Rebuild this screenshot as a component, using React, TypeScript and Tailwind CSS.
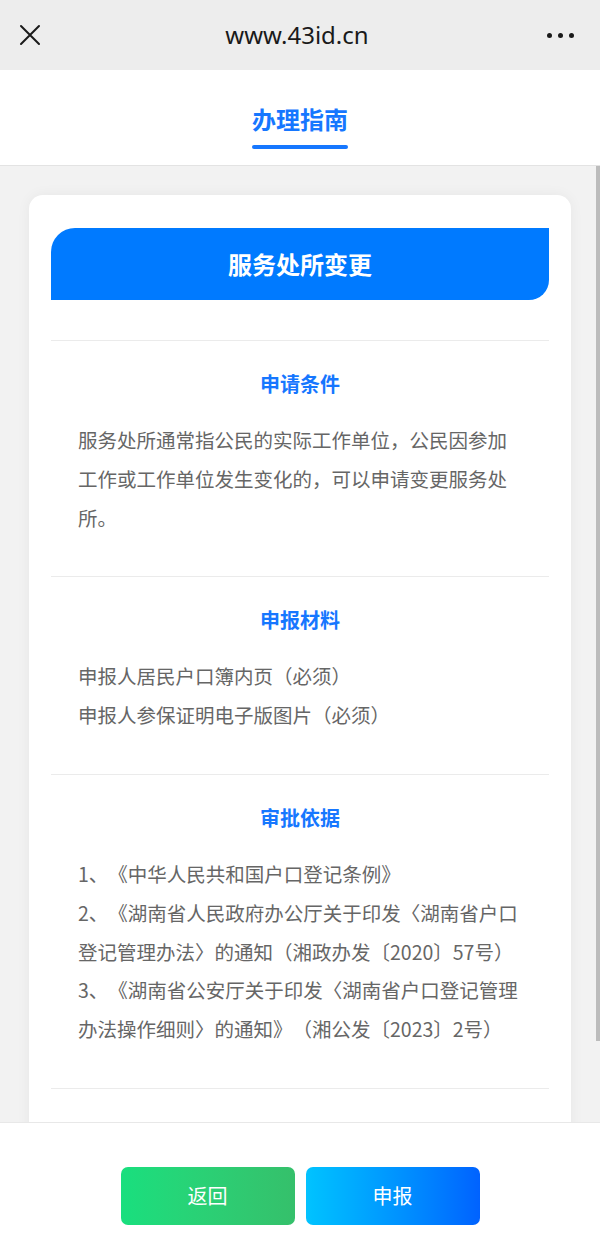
import React from 'react';

const sections: { title: string; lines: string[] }[] = [
  {
    title: '申请条件',
    lines: [
      '服务处所通常指公民的实际工作单位，公民因参加',
      '工作或工作单位发生变化的，可以申请变更服务处',
      '所。',
    ],
  },
  {
    title: '申报材料',
    lines: ['申报人居民户口簿内页（必须）', '申报人参保证明电子版图片（必须）'],
  },
  {
    title: '审批依据',
    lines: [
      '1、《中华人民共和国户口登记条例》',
      '2、《湖南省人民政府办公厅关于印发〈湖南省户口',
      '登记管理办法〉的通知（湘政办发〔2020〕57号）',
      '3、《湖南省公安厅关于印发〈湖南省户口登记管理',
      '办法操作细则〉的通知》（湘公发〔2023〕2号）',
    ],
  },
];

const cjk = { fontFamily: '"Noto Sans CJK SC", "Noto Sans", sans-serif' };

export default function App() {
  return (
    <div className="relative flex h-[1233px] w-[600px] flex-col overflow-hidden bg-white" style={cjk}>
      {/* browser title bar */}
      <div className="flex h-[70px] shrink-0 items-center justify-between bg-[#ededed] px-[18px]">
        <svg width="22" height="22" viewBox="0 0 22 22" className="ml-[1px]">
          <path d="M2 2 L20 20 M20 2 L2 20" stroke="#1a1a1a" strokeWidth="2" strokeLinecap="round" />
        </svg>
        <div className="ml-[6px] text-[24px] text-[#1a1a1a]" style={{ fontFamily: '"Noto Sans", "Open Sans", sans-serif' }}>
          www.43id.cn
        </div>
        <div className="mr-[8px] flex gap-[6px]">
          <span className="h-[5px] w-[5px] rounded-full bg-[#1a1a1a]" />
          <span className="h-[5px] w-[5px] rounded-full bg-[#1a1a1a]" />
          <span className="h-[5px] w-[5px] rounded-full bg-[#1a1a1a]" />
        </div>
      </div>

      {/* tab */}
      <div className="flex h-[96px] shrink-0 flex-col items-center border-b border-[#e3e3e3] pt-[33px]">
        <div className="text-[24px] font-bold leading-[32px] text-[#1677ff]">办理指南</div>
        <div className="mt-[10px] h-[4px] w-[96px] rounded-full bg-[#1677ff]" />
      </div>

      {/* content */}
      <div className="flex-1 overflow-hidden bg-[#f2f2f2] px-[29px] pt-[29px]">
        <div className="rounded-[14px] bg-white px-[22px] pt-[33px] pb-[40px] shadow-[0_0_14px_rgba(0,0,0,0.05)]">
          <div className="flex h-[72px] items-center justify-center rounded-tl-[24px] rounded-br-[20px] bg-[#007aff] text-[24px] font-bold text-white">
            服务处所变更
          </div>
          <div className="mt-[40px]">
            {sections.map((s) => (
              <div key={s.title} className="border-t border-[#ebebeb] pt-[29px] pb-[39px]">
                <div className="text-center text-[20px] font-bold leading-[28px] text-[#1677ff]">{s.title}</div>
                <div className="mt-[23px] px-[27px] text-[19.5px] leading-[38.8px] text-[#666666] [text-spacing-trim:space-all]">
                  {s.lines.map((l, i) => (
                    <div key={i} className="whitespace-nowrap">
                      {l}
                    </div>
                  ))}
                </div>
              </div>
            ))}
            <div className="border-t border-[#ebebeb] h-[60px]" />
          </div>
        </div>
      </div>

      {/* scrollbar */}
      <div className="absolute right-0 top-[166px] h-[875px] w-[4px] bg-[#bcbcbc]" />

      {/* footer */}
      <div className="flex h-[111px] shrink-0 justify-center gap-[11px] border-t border-[#e8e8e8] bg-white pt-[44px]">
        <button className="h-[58px] w-[174px] rounded-[7px] bg-gradient-to-r from-[#18df7e] to-[#35c06b] text-[20px] text-white">
          返回
        </button>
        <button className="h-[58px] w-[174px] rounded-[7px] bg-gradient-to-r from-[#05c3ff] to-[#0062ff] text-[20px] text-white">
          申报
        </button>
      </div>
    </div>
  );
}
